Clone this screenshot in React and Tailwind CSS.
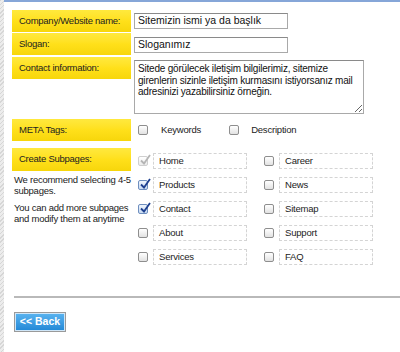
import React from 'react';

const font = {fontFamily: '"Liberation Sans", Arial, sans-serif'};

const Label = ({children, className = ''}) => (
    <div
        className={`flex h-[22px] w-[119px] shrink-0 items-center bg-gradient-to-b from-[#ffe93d] via-[#ffe01a] to-[#f7d60a] pl-[7px] text-[9.5px] tracking-[-0.25px] text-[#222] ${className}`}>
        {children}
    </div>
);

const Check = ({checked, disabled}) => (
    <span
        className={`relative flex h-[10px] w-[10px] shrink-0 items-center justify-center rounded-[2px] border bg-gradient-to-b ${disabled ? 'border-[#cfcfcf] from-white to-[#ececec]' : checked ? 'border-[#6f8fbf] from-[#eef4fc] to-[#c9dbf2]' : 'border-[#8e8e8e] from-white to-[#e2e2e2]'}`}>
        {checked && (
            <svg viewBox="0 0 12 12" className="absolute -top-[3px] left-0 h-[12px] w-[12px]">
                <path d="M2 6.5 L5 9.5 L11 1" fill="none" strokeWidth="1.8"
                      stroke={disabled ? '#b5b5b5' : '#1d3f8f'}/>
            </svg>
        )}
    </span>
);

const Page = ({name, checked, disabled}) => (
    <div className="flex h-[16px] items-center">
        <Check checked={checked} disabled={disabled}/>
        <div
            className="ml-[5px] flex h-[16px] w-[94px] items-center border border-dashed border-[#d4d4d4] pl-[5px] text-[9.5px] tracking-[-0.2px] text-[#222]">
            {name}
        </div>
    </div>
);

const left = [
    {name: 'Home', checked: true, disabled: true},
    {name: 'Products', checked: true},
    {name: 'Contact', checked: true},
    {name: 'About'},
    {name: 'Services'},
];
const right = [{name: 'Career'}, {name: 'News'}, {name: 'Sitemap'}, {name: 'Support'}, {name: 'FAQ'}];

export default function App() {
    return (
        <div className="flex h-[352px] w-[400px] overflow-hidden bg-white" style={font}>
            <div
                className="w-[4px] shrink-0 bg-[repeating-linear-gradient(135deg,#d6d6d6_0px,#d6d6d6_1px,#ececec_1px,#ececec_3px)]"/>
            <div className="flex-1">
                <div className="h-[2px] bg-[#86a6d8]"/>
                <div className="pl-[8px] pt-[8px]">
                    <div className="flex">
                        <Label>Company/Website name:</Label>
                        <div
                            className="ml-[3px] mt-[3px] flex h-[16px] w-[154px] items-center border border-[#a9a9a9] border-t-[#8a8a8a] pl-[3px] text-[10.5px] text-[#111]">
                            Sitemizin ismi ya da başlık
                        </div>
                    </div>
                    <div className="mt-[1px] flex">
                        <Label>Slogan:</Label>
                        <div
                            className="ml-[3px] mt-[4px] flex h-[16px] w-[154px] items-center border border-[#a9a9a9] border-t-[#8a8a8a] pl-[3px] text-[10.5px] text-[#111]">
                            Sloganımız
                        </div>
                    </div>
                    <div className="mt-[2px] flex">
                        <Label>Contact information:</Label>
                        <textarea
                            readOnly
                            value="Sitede görülecek iletişim bilgilerimiz, sitemize girenlerin sizinle iletişim kurmasını istiyorsanız mail adresinizi yazabilirsiniz örneğin."
                            className="ml-[3px] mt-[3px] h-[54px] w-[230px] resize overflow-hidden border border-[#a9a9a9] border-t-[#8a8a8a] px-[3px] pt-[2px] text-[10px] leading-[11.5px] tracking-[-0.2px] text-[#111] outline-none"
                            style={font}
                        />
                    </div>
                    <div className="mt-[5px] flex items-center">
                        <Label>META Tags:</Label>
                        <div className="ml-[7px] flex items-center">
                            <Check/>
                            <span className="ml-[13px] text-[9.5px] tracking-[-0.2px] text-[#222]">Keywords</span>
                        </div>
                        <div className="ml-[28px] flex items-center">
                            <Check/>
                            <span className="ml-[12px] text-[9.5px] tracking-[-0.2px] text-[#222]">Description</span>
                        </div>
                    </div>
                    <div className="mt-[7px] flex">
                        <div className="w-[119px] shrink-0">
                            <Label className="h-[23px]">Create Subpages:</Label>
                            <div className="pl-[2px] text-[9.5px] leading-[10.5px] tracking-[-0.25px] text-[#222]">
                                <p className="mt-[4px]">We recommend selecting 4-5 subpages.</p>
                                <p className="mt-[7px]">You can add more subpages and modify them at anytime</p>
                            </div>
                        </div>
                        <div className="ml-[7px] mt-[5px] grid grid-cols-[126px_126px] gap-y-[8px]">
                            {left.map((p, i) => (
                                <React.Fragment key={p.name}>
                                    <Page {...p}/>
                                    <Page {...right[i]}/>
                                </React.Fragment>
                            ))}
                        </div>
                    </div>
                    <div className="ml-[2px] mt-[31px] h-[2px] bg-[#b9b9b9]"/>
                    <button
                        className="ml-[2px] mt-[14px] flex h-[20px] w-[52px] items-center justify-center border border-[#9a9a9a] bg-gradient-to-b from-[#5ab4f0] to-[#1f87d6] p-0 text-[10.5px] font-bold text-white shadow-[inset_0_0_0_1px_#cfe6f8]">
                        &lt;&lt; Back
                    </button>
                </div>
            </div>
        </div>
    );
}
